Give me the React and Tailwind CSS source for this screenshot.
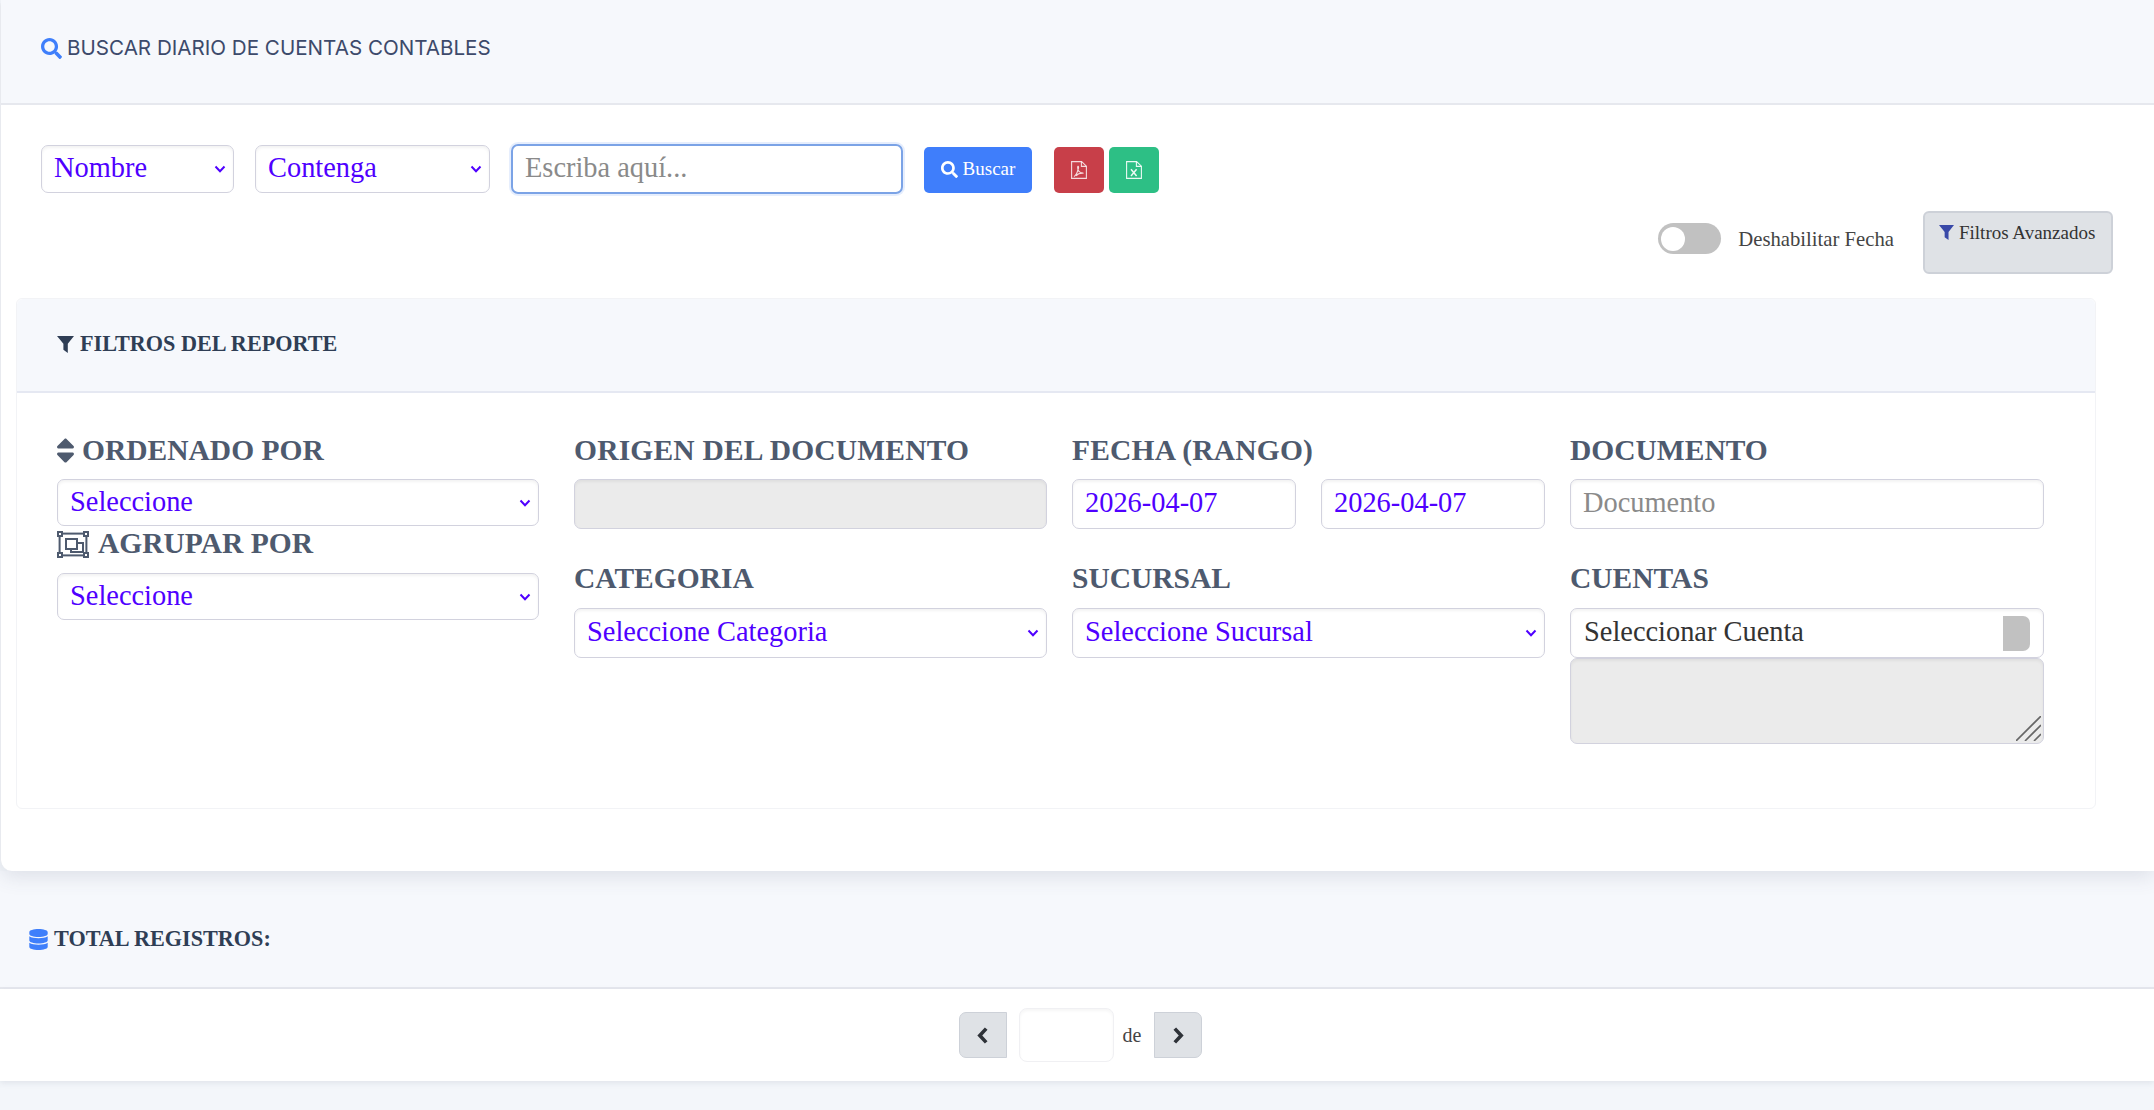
import React from "react";
import { FaSearch, FaSort, FaDatabase } from "react-icons/fa";

const serif = "font-['Liberation_Serif',serif]";

function Chevron({ className }) {
  return (
    <svg viewBox="0 0 12 8" className={`pointer-events-none absolute top-1/2 h-[8px] w-[12px] -translate-y-1/2 text-[#4f00ff] ${className}`} fill="none" stroke="currentColor" strokeWidth="2">
      <path d="M1.5 1.5 6 6.2l4.5-4.7" />
    </svg>
  );
}

function Funnel({ className }) {
  return (
    <svg viewBox="0 0 17 17" className={className} fill="currentColor">
      <path d="M0 0h17l-6.2 7.8V17l-4.4-3.2V7.8z" />
    </svg>
  );
}

function PdfIcon() {
  return (
    <svg viewBox="0 0 16 18" className="h-[18px] w-[16px] text-white/80" fill="none" stroke="currentColor" strokeWidth="1.1">
      <path d="M.6.6h10l4.8 4.6v12.2H.6z" />
      <path d="M10.4.8v4.6h4.8" />
      <path d="M3 15.6c1.6-1 3.3-4 4-7.2-.5-1.8-.5-3 0-3.2.7.4.6 2 0 3.4.8 2.4 2 3.4 5.6 3.6-2.6-.2-6 .8-7.6 2.6" />
    </svg>
  );
}

function XlsIcon() {
  return (
    <svg viewBox="0 0 16 18" className="h-[18px] w-[16px] text-white/90" fill="none" stroke="currentColor" strokeWidth="1.1">
      <path d="M.6.6h10l4.8 4.6v12.2H.6z" />
      <path d="M10.4.8v4.6h4.8" />
      <path d="M5 8.2l5.6 6.8M10.6 8.2 5 15" strokeWidth="1.5" />
    </svg>
  );
}

function GroupIcon() {
  return (
    <svg viewBox="0 0 32 27" className="mr-[9px] h-[27px] w-[32px] shrink-0" fill="none" stroke="currentColor" strokeWidth="2">
      <rect x="2.6" y="2.6" width="26.8" height="21.8" />
      <rect x="1" y="1" width="4" height="4" fill="#fff" />
      <rect x="27" y="1" width="4" height="4" fill="#fff" />
      <rect x="1" y="22" width="4" height="4" fill="#fff" />
      <rect x="27" y="22" width="4" height="4" fill="#fff" />
      <path d="M9 8h11v10H9z" />
      <path d="M20 12h6v9H14v-3" />
    </svg>
  );
}

function Sel({ value, className = "" }) {
  return (
    <div className={`relative ${className}`}>
      <select defaultValue={value} className={`${serif} block h-full w-full appearance-none rounded-[7px] border border-[#d2d2de] bg-white pb-[1px] pl-[12px] pr-8 text-[28.4px] leading-none text-[#4f00ff] shadow-[inset_0_2px_3px_rgba(0,0,0,0.05)] outline-none`}>
        <option>{value}</option>
      </select>
      <Chevron className="right-[8px]" />
    </div>
  );
}

function Label({ children, className = "" }) {
  return (
    <div className={`${serif} flex items-center text-[29.5px] font-bold leading-none text-[#4e5a6e] ${className}`}>
      {children}
    </div>
  );
}

const inputCls = `${serif} block h-[50px] w-full rounded-[7px] border border-[#d2d2de] pb-[2px] px-[12px] text-[28.4px] leading-none outline-none shadow-[inset_0_2px_3px_rgba(0,0,0,0.05)]`;

export default function App() {
  return (
    <div className="h-[1110px] w-full overflow-hidden bg-[#f3f6fa]">
      <div className="relative z-10 h-[871px] rounded-bl-[12px] rounded-tl-[6px] border-l border-[#e8eaef] bg-white shadow-[0_6px_20px_rgba(60,70,100,0.13)]">
        <div className="flex h-[105px] items-center border-b-2 border-[#e6e8ee] bg-[#f6f8fc] pb-[7px] pl-[40px]">
          <FaSearch className="mr-[5px] h-[21px] w-[21px] text-[#3f7ffb]" />
          <span className="font-['Inter',sans-serif] text-[20.6px] font-normal text-[#3d4a6b]">BUSCAR DIARIO DE CUENTAS CONTABLES</span>
        </div>

        <div className="flex h-[106px] items-start pl-[40px] pt-[40px]">
          <Sel value="Nombre" className="h-[48px] w-[193px]" />
          <Sel value="Contenga" className="ml-[21px] h-[48px] w-[235px]" />
          <input placeholder="Escriba aquí..." className={`${serif} ml-[21px] -mt-px h-[50px] w-[392px] rounded-[7px] border-2 border-[#7ba3e6] pb-[2px] px-[12px] text-[28.4px] text-[#333] shadow-[0_0_0_2px_rgba(90,140,240,0.15)] outline-none placeholder:text-[#8a8a8a]`} />
          <button className={`${serif} ml-[21px] mt-[2px] flex h-[46px] w-[108px] items-center justify-center gap-[5px] rounded-[5px] bg-[#3f7efb] pb-[2px] text-[19px] text-white`}>
            <FaSearch className="h-[17px] w-[17px]" />Buscar
          </button>
          <button className="ml-[22px] mt-[2px] flex h-[46px] w-[50px] items-center justify-center rounded-[5px] bg-[#c83f49]">
            <PdfIcon />
          </button>
          <button className="ml-[5px] mt-[2px] flex h-[46px] w-[50px] items-center justify-center rounded-[5px] bg-[#2dbf85]">
            <XlsIcon />
          </button>
        </div>

        <div className={`${serif} flex h-[63px] items-start justify-end pr-[41px]`}>
          <div className="relative mt-[12px] h-[31px] w-[63px] rounded-full bg-[#c1c1c1]">
            <div className="absolute left-[3px] top-[4px] h-[24px] w-[24px] rounded-full bg-white" />
          </div>
          <span className="ml-[17px] mt-[18px] text-[20.7px] leading-none text-[#444]">Deshabilitar Fecha</span>
          <button className="ml-[29px] flex h-[63px] w-[190px] items-start rounded-[6px] border-2 border-[#cdd1d8] bg-[#dfe2e6] pl-[14px] pt-[8px] text-[19px] leading-[24px] text-[#333]">
            <Funnel className="mr-[5px] mt-[4px] h-[15px] w-[15px] shrink-0 text-[#3949a8]" />Filtros Avanzados
          </button>
        </div>

        <div className="ml-[15px] mt-[24px] h-[511px] w-[2080px] rounded-[6px] border border-[#f2f3f6]">
          <div className={`${serif} flex h-[94px] items-center rounded-t-[6px] border-b-2 border-[#e5e8f2] bg-[#f6f8fc] pb-[2px] pl-[40px] text-[22.2px] font-bold text-[#2f3e55]`}>
            <Funnel className="mr-[6px] h-[17px] w-[17px] shrink-0" />FILTROS DEL REPORTE
          </div>
          <div className="flex pl-[40px] pt-[44px]">
            <div className="flex w-[482px] flex-col">
              <Label className="h-[27px]">
                <FaSort preserveAspectRatio="none" className="-my-[2px] -ml-[1px] mr-[7px] h-[31px] w-[19px] shrink-0" />ORDENADO POR
              </Label>
              <Sel value="Seleccione" className="mt-[15px] h-[47px]" />
              <Label className="mt-[4px] h-[28px]">
                <GroupIcon />AGRUPAR POR
              </Label>
              <Sel value="Seleccione" className="mt-[15px] h-[47px]" />
            </div>
            <div className="ml-[35px] grid flex-1 grid-cols-[473px_473px_474px] gap-x-[25px]">
              <div>
                <Label className="h-[27px] tracking-[0.2px]">ORIGEN DEL DOCUMENTO</Label>
                <div className={`${inputCls} mt-[15px] bg-[#ebebeb]`} />
              </div>
              <div>
                <Label className="h-[27px] tracking-[0.2px]">FECHA (RANGO)</Label>
                <div className="mt-[15px] flex gap-[25px]">
                  <input defaultValue="2026-04-07" className={`${inputCls} text-[#4f00ff]`} />
                  <input defaultValue="2026-04-07" className={`${inputCls} text-[#4f00ff]`} />
                </div>
              </div>
              <div>
                <Label className="h-[27px]">DOCUMENTO</Label>
                <input placeholder="Documento" className={`${inputCls} mt-[15px] placeholder:text-[#8a8a8a]`} />
              </div>

              <div className="mt-[36px]">
                <Label className="h-[27px]">CATEGORIA</Label>
                <Sel value="Seleccione Categoria" className="mt-[16px] h-[50px]" />
              </div>
              <div className="mt-[36px]">
                <Label className="h-[27px]">SUCURSAL</Label>
                <Sel value="Seleccione Sucursal" className="mt-[16px] h-[50px]" />
              </div>
              <div className="mt-[36px]">
                <Label className="h-[27px]">CUENTAS</Label>
                <div className={`${serif} mt-[16px] flex h-[50px] items-center justify-between rounded-[7px] border border-[#d2d2de] bg-white pb-[2px] pl-[13px] pr-[13px] text-[28.4px] text-[#333] shadow-[inset_0_2px_3px_rgba(0,0,0,0.05)]`}>
                  Seleccionar Cuenta
                  <div className="mt-[2px] h-[35px] w-[27px] rounded-r-[7px] bg-[#c1c1c1]" />
                </div>
                <div className="relative">
                  <textarea disabled className="block h-[86px] w-full resize-none rounded-[7px] border border-[#d2d2de] bg-[#ebebeb] outline-none shadow-[inset_0_2px_3px_rgba(0,0,0,0.05)]" />
                  <svg viewBox="0 0 25 25" className="absolute bottom-[3px] right-[3px] h-[25px] w-[25px] text-[#666]" stroke="currentColor" strokeWidth="1.6" fill="none">
                    <path d="M0 25 25 0M9 25 25 9M18 25l7-7" />
                  </svg>
                </div>
              </div>
            </div>
          </div>
        </div>
      </div>

      <div className={`${serif} flex h-[118px] items-center border-b-2 border-[#e6e8ee] bg-[#f6f8fc] pl-[29px] pt-[20px] text-[22.2px] font-bold text-[#2f3e55]`}>
        <FaDatabase className="mr-[6px] h-[21px] w-[19px] text-[#3f7ffb]" />TOTAL REGISTROS:
      </div>
      <div className={`${serif} flex h-[92px] items-center justify-center bg-white pl-[7px] shadow-[0_2px_6px_rgba(60,70,100,0.1)]`}>
        <button className="flex h-[46px] w-[48px] items-center justify-center rounded-l-[7px] border border-[#cdd1d8] bg-[#dfe2e6] text-[#2e3238]">
          <svg viewBox="0 0 11 17" className="h-[17px] w-[11px]" fill="none" stroke="currentColor" strokeWidth="3.6"><path d="M9.2 1.6 2.8 8.5l6.4 6.9" /></svg>
        </button>
        <input className="ml-[12px] h-[54px] w-[95px] rounded-[8px] border border-[#f0f0f3] shadow-[inset_0_2px_3px_rgba(0,0,0,0.04)] outline-none" />
        <span className="ml-[9px] text-[20px] text-[#444]">de</span>
        <button className="ml-[13px] flex h-[46px] w-[48px] items-center justify-center rounded-r-[7px] border border-[#cdd1d8] bg-[#dfe2e6] text-[#2e3238]">
          <svg viewBox="0 0 11 17" className="h-[17px] w-[11px]" fill="none" stroke="currentColor" strokeWidth="3.6"><path d="M1.8 1.6 8.2 8.5l-6.4 6.9" /></svg>
        </button>
      </div>
    </div>
  );
}
